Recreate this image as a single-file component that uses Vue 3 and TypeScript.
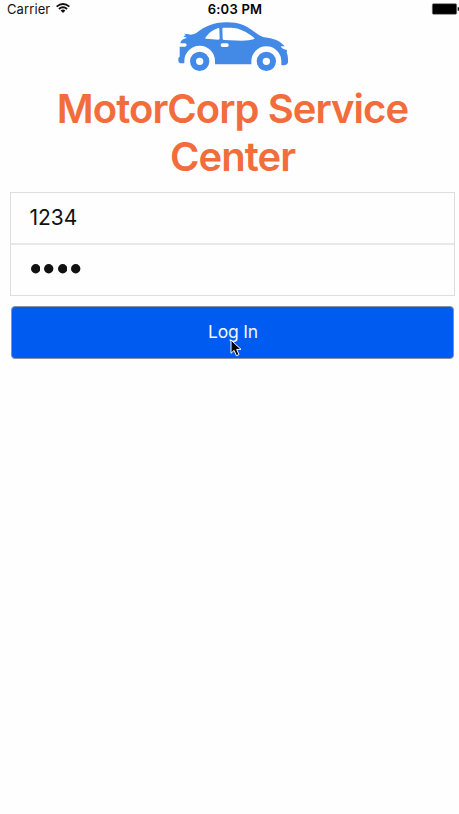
<script setup lang="ts">
import { ref } from 'vue'

const username = ref('1234')
const password = ref('1234')
const titleLines: string[] = ['MotorCorp Service', 'Center']
</script>

<template>
  <main class="screen">
    <header class="status">
      <div class="carrier">
        <span class="carrier-name">Carrier</span>
        <svg class="wifi" viewBox="0 0 14 10">
          <path d="M.6 3.6Q7-1.7 13.4 3.6M2.9 6Q7 2.6 11.1 6" fill="none" stroke="#111" stroke-width="1.8" />
          <path d="M4.6 7.5Q7 5.7 9.4 7.5L7 9.9Z" fill="#111" />
        </svg>
      </div>
      <span class="time">6:03 PM</span>
      <svg class="battery" viewBox="0 0 28 12">
        <rect x="1.3" y=".7" width="24.4" height="10.6" rx="1.3" fill="#000" stroke="#777" stroke-width=".6" />
        <path d="M26.7 4.3h1.3v3.4h-1.3z" fill="#111" />
      </svg>
    </header>

    <svg class="car" viewBox="24 65 332 150">
      <path
        fill="#438ae6"
        d="M43 101Q41 100 43 100L56 102Q61 104 69 102L78 99C105 77 130 67 167 66C204 65 225 74 253 94Q268 106 279 110Q328 116 341 135L344 138H332Q337 148 351 149L350 157Q354 163 354 176V186Q353 193 343 195H334V183A45 45 0 0 0 244 183V192H135V183A46 46 0 0 0 43 181V189H31Q25 187 25 181V173L29 169V139H45Q50 138 50 134T45 129H31Q32 119 43 115L51 112L42 109Q39 107 43 106L48 105Z"
      />
      <path
        fill="#fefefe"
        d="M106 112Q121 91 143 84Q148 82 148 86L149 114Q149 118 145 118L109 115Q104 115 106 112ZM157 84Q157 82 160 82L183 82C209 83 230 94 252 112Q256 116 251 117Q238 121 216 121L163 119Q158 119 158 115Z"
      />
      <rect x="152" y="129" width="24" height="11" rx="5" fill="#fefefe" />
      <g fill="none" stroke="#438ae6" stroke-width="18">
        <circle cx="89" cy="183" r="20" />
        <circle cx="289" cy="183" r="20" />
      </g>
    </svg>

    <h1 class="title">
      <span v-for="line in titleLines" :key="line" class="title-line">{{ line }}</span>
    </h1>

    <form class="login" @submit.prevent>
      <div class="fields">
        <input v-model="username" class="field" type="text" aria-label="Username" />
        <label class="field secret" aria-label="Password">
          <svg v-for="(_, i) in password" :key="i" class="dot" viewBox="0 0 10 10">
            <circle cx="5" cy="5" r="5" fill="#111" />
          </svg>
        </label>
      </div>
      <button class="submit" type="submit">
        Log In
        <svg class="pointer" viewBox="0 0 12 18">
          <path d="M1 1V14.3L4.1 11.4L6.4 16.7L9 15.6L6.7 10.4H11Z" fill="#000" stroke="#fff" stroke-width="1" />
        </svg>
      </button>
    </form>
  </main>
</template>

<style>
body {
  margin: 0;
  background: #fefefe;
}
</style>

<style scoped>
.screen {
  box-sizing: border-box;
  width: 100%;
  height: 814px;
  overflow: hidden;
  background: #fefefe;
  font-family: Inter, "Liberation Sans", sans-serif;
}
.status {
  display: grid;
  grid-template-columns: 200px 1fr 196px;
  align-items: center;
  height: 18px;
  margin-right: -7px;
  padding: 0 7px;
  color: #111;
  font-size: 13px;
}
.carrier {
  display: flex;
  align-items: center;
  gap: 5.5px;
}
.carrier-name {
  letter-spacing: 0.1px;
}
.wifi {
  width: 14px;
  height: 10px;
  margin-top: -2px;
}
.time {
  color: #000;
  font-weight: 600;
  letter-spacing: 0.25px;
  text-align: center;
  white-space: nowrap;
}
.battery {
  justify-self: end;
  width: 28px;
  height: 12px;
  margin-top: -1px;
}
.car {
  display: block;
  width: 110.7px;
  height: 50px;
  margin: 4px 0 0 178px;
}
.title {
  display: flex;
  flex-direction: column;
  align-items: center;
  margin: 13px 0 0 6px;
  color: #f36c3b;
  font-size: 40px;
  font-weight: 600;
  line-height: 48px;
}
.title-line {
  white-space: nowrap;
  letter-spacing: -0.95px;
}
.login {
  padding: 11px 4px 0 10px;
}
.fields {
  box-sizing: border-box;
  height: 104px;
  border: 1px solid #dedede;
}
.field {
  display: flex;
  box-sizing: border-box;
  align-items: center;
  width: 100%;
  height: 50px;
  padding: 0 18.5px 1px;
  border: 0;
  outline: 0;
  background: transparent;
  color: #111;
  font-family: inherit;
  font-size: 21px;
}
.secret {
  gap: 4px;
  height: 52px;
  padding: 0 20px 2px;
  border-top: 2px solid #e8e8e8;
}
.dot {
  width: 9.4px;
  height: 9.4px;
}
.submit {
  position: relative;
  display: block;
  box-sizing: border-box;
  width: calc(100% - 2px);
  height: 53px;
  margin: 10px 0 0 1px;
  padding: 0 0 2px 1px;
  border: 1px solid #8c939f;
  border-radius: 4px;
  background: #005cf0;
  color: #f0f5ff;
  font-family: inherit;
  font-size: 17.5px;
  letter-spacing: -0.2px;
}
.pointer {
  position: absolute;
  top: 32px;
  left: 218px;
  width: 12px;
  height: 18px;
}
</style>
